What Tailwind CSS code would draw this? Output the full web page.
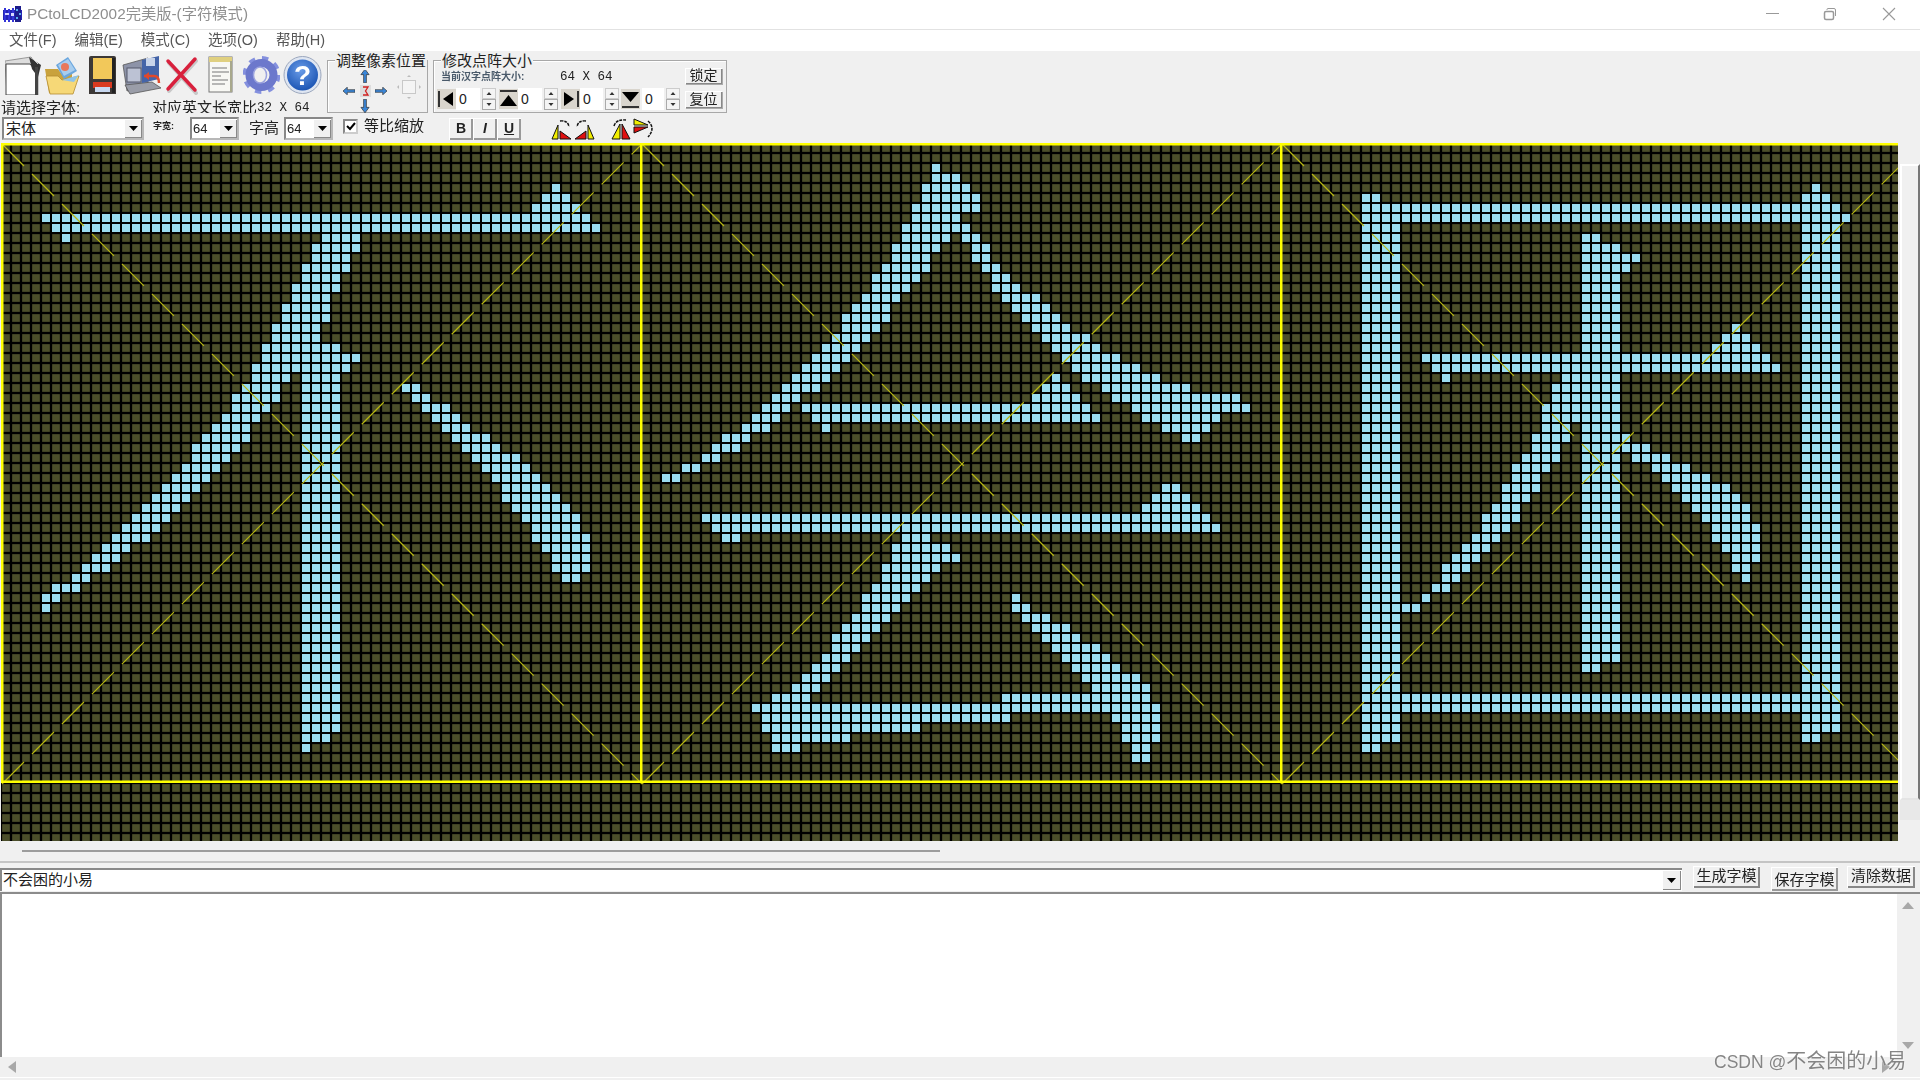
<!DOCTYPE html>
<html lang="zh-CN">
<head>
    <meta charset="UTF-8">
    <title>PCtoLCD2002完美版-(字符模式)</title>
    <script src="https://cdn.jsdelivr.net/npm/@tailwindcss/browser@4"></script>
</head>
<body class="w-[1920px] h-[1080px] overflow-hidden relative flex flex-col bg-[#f0f0f0] text-[#222] font-['Liberation_Sans','Noto_Sans_CJK_SC',sans-serif]">

    <!-- Title bar -->
    <header class="h-[29px] bg-white flex items-center shrink-0">
        <svg class="ml-[2px] w-[21px] h-[17px]" viewBox="0 0 21 17">
            <rect x="1" y="4" width="19" height="10" fill="#2424b4"/>
            <rect x="13" y="0" width="6" height="16" fill="#1c1c8c"/>
            <rect x="2" y="2" width="2" height="14" fill="#3434d8"/>
            <rect x="6" y="3" width="2" height="13" fill="#3434d8"/>
            <rect x="10" y="2" width="2" height="14" fill="#3434d8"/>
            <rect x="3" y="7" width="4" height="2" fill="#d8d8ff"/>
            <rect x="9" y="7" width="3" height="3" fill="#d8d8ff"/>
            <rect x="14" y="3" width="2" height="2" fill="#5ab0f0"/>
            <rect x="17" y="7" width="2" height="2" fill="#5ab0f0"/>
            <rect x="14" y="11" width="2" height="2" fill="#5ab0f0"/>
        </svg>
        <span class="ml-[4px] text-[15.3px] text-[#8f8f8f] whitespace-nowrap blur-[0.3px]">PCtoLCD2002完美版-(字符模式)</span>
        <div class="ml-auto flex items-center">
            <svg class="w-[58px] h-[29px]" viewBox="0 0 58 29"><rect x="8" y="13" width="13" height="1" fill="#999"/></svg>
            <svg class="w-[59px] h-[29px]" viewBox="0 0 59 29" fill="none" stroke="#999"><rect x="8.500" y="11.500" width="9" height="8" rx="1.500" stroke-width="1.500"/><path d="M11 10V9.500Q11 8.500 12 8.500H18Q19.500 8.500 19.500 10V16"/></svg>
            <svg class="w-[45px] h-[29px]" viewBox="0 0 45 29" stroke="#999" stroke-width="1.100"><path d="M8 8L20 20M20 8L8 20"/></svg>
        </div>
    </header>

    <!-- Menu -->
    <nav class="h-[22px] bg-white border-t border-[#e2e2e2] flex items-center gap-[18px] pl-[9px] text-[14.500px] text-[#555] shrink-0 blur-[0.3px]">
        <span>文件(F)</span><span>编辑(E)</span><span>模式(C)</span><span>选项(O)</span><span>帮助(H)</span>
    </nav>

    <!-- Toolbar -->
    <section class="h-[92px] shrink-0 flex flex-col blur-[0.3px]">
        <div class="h-[65px] flex">
            <div class="w-[327px] flex flex-col">
                <div class="h-[49px] pt-[4px] pl-[5px] flex">
                    <svg class="w-[37px] h-[40px]" viewBox="0 0 37 40">
                        <path d="M0 6L26 2L33 10V40H2Z" fill="#ddd" stroke="#999"/>
                        <path d="M1 9H25L31 16V40H1Z" fill="#fff" stroke="#444"/>
                        <path d="M24 2L36 10L33 22L27 14Z" fill="#333"/>
                        <path d="M27 3L33 9" stroke="#ccc"/>
                        <rect x="30" y="12" width="3" height="28" fill="#444"/>
                    </svg>
                    <svg class="ml-[2px] w-[36px] h-[40px]" viewBox="0 0 36 40">
                        <path d="M1 14H14L17 18H28V38H5Z" fill="#c9a23c"/>
                        <path d="M12 10L24 2L33 16L20 24Z" fill="#6aa6de"/>
                        <path d="M14 10L24 4L31 15L20 21Z" fill="#a8cdee"/>
                        <circle cx="21" cy="12" r="4" fill="#e8785a"/>
                        <path d="M6 39L2 21H14L18 25L35 21L29 39Z" fill="#f6d877" stroke="#b48c30" stroke-width=".8"/>
                        <path d="M18 25L35 20L30 27Z" fill="#8fc4e8"/>
                    </svg>
                    <svg class="ml-[8px] w-[29px] h-[40px]" viewBox="0 0 29 40">
                        <path d="M1 3Q1 1 3 1H26Q28 1 28 3V39H1Z" fill="#3c3836"/>
                        <rect x="5" y="3" width="19" height="21" fill="#f2c85a"/>
                        <rect x="5" y="27" width="19" height="6" fill="#d83a20"/>
                        <rect x="7" y="32" width="15" height="5" fill="#c8d8f0"/>
                        <rect x="24" y="3" width="3" height="35" fill="#222"/>
                    </svg>
                    <svg class="ml-[5px] w-[41px] h-[40px]" viewBox="0 0 41 40">
                        <path d="M1 10L26 3V30L5 36Z" fill="#8d93a8" stroke="#555" stroke-width=".8"/>
                        <rect x="5" y="13" width="14" height="14" fill="#bcc2d4" stroke="#55586a"/>
                        <path d="M3 30L30 27L39 33L8 39Z" fill="#9a9da8" stroke="#555" stroke-width=".8"/>
                        <path d="M20 5L37 1V24L20 28Z" fill="#4464a8"/>
                        <rect x="24" y="3" width="9" height="8" fill="#c8d4ea"/>
                        <path d="M22 21H32Q37 21 37 28" fill="none" stroke="#e0482a" stroke-width="2.500"/>
                        <path d="M22 21L27 17V25Z" fill="#e0482a"/>
                    </svg>
                    <svg class="ml-[2px] w-[33px] h-[40px]" viewBox="0 0 33 40" stroke-linecap="round">
                        <path d="M3 7L30 37M30 5L3 35" stroke="#c8c8c8" stroke-width="4" transform="translate(1 1)"/>
                        <path d="M3 6L30 35M30 4L3 34" stroke="#d8203c" stroke-width="3.500"/>
                    </svg>
                    <svg class="ml-[10px] w-[25px] h-[40px]" viewBox="0 0 25 40">
                        <rect x="1" y="2" width="23" height="35" fill="#f8f8f4" stroke="#777"/>
                        <rect x="1" y="2" width="23" height="5" fill="#e0d080"/>
                        <path d="M4 13H19M4 17H21M4 21H13M4 25H20M4 29H17" stroke="#777" stroke-width="1.200"/>
                        <rect x="22" y="6" width="2" height="31" fill="#a8a88c"/>
                    </svg>
                    <svg class="ml-[10px] w-[37px] h-[40px]" viewBox="0 0 37 40">
                        <circle cx="18.500" cy="20" r="16" fill="none" stroke="#8490de" stroke-width="6" stroke-dasharray="6 6.560"/>
                        <circle cx="18.500" cy="20" r="12" fill="none" stroke="#6c78cc" stroke-width="8"/>
                        <ellipse cx="17" cy="20" rx="6.500" ry="8" fill="#f0f0f0"/>
                        <ellipse cx="17" cy="20" rx="6.500" ry="8" fill="none" stroke="#9aa2de" stroke-width="1.500"/>
                    </svg>
                    <svg class="ml-[3px] w-[39px] h-[40px]" viewBox="0 0 39 40">
                        <defs><radialGradient id="helpBlue" cx=".45" cy=".35" r=".7"><stop offset="0" stop-color="#6a9ce8"/><stop offset="1" stop-color="#1650b0"/></radialGradient></defs>
                        <circle cx="19.500" cy="20" r="18.500" fill="#dfe6f2" stroke="#9aa6bc"/>
                        <circle cx="19.500" cy="20" r="15.500" fill="url(#helpBlue)"/>
                        <text x="19.500" y="30" text-anchor="middle" font-size="28" font-weight="700" fill="#fff" font-family="Liberation Sans">?</text>
                    </svg>
                </div>
                <div class="h-[16px] flex text-[15px] leading-[16px]">
                    <span class="w-[152px] pl-[1px] whitespace-nowrap">请选择字体:</span>
                    <span class="h-[13px] overflow-hidden whitespace-nowrap">对应英文长宽比<span class="relative -top-[2px] font-['Liberation_Mono',monospace] text-[12.500px]">32 X 64</span></span>
                </div>
            </div>

            <!-- 调整像素位置 -->
            <div class="relative mt-[9px] h-[53px] w-[101px] border border-[#a8a8a8] shadow-[inset_1px_1px_0_#fff] flex items-start pt-[7px] pl-[13px]">
                <span class="absolute -top-[9px] left-[7px] px-[1px] bg-[#f0f0f0] text-[15px] leading-[18px] whitespace-nowrap">调整像素位置</span>
                <div class="grid grid-cols-[16px_16px_16px] grid-rows-[15px_15px_15px] justify-items-center items-center">
                    <span></span>
                    <svg class="w-[10px] h-[14px]" viewBox="0 0 11 15"><path d="M5.500 0L10 6H7V15H4V6H1Z" fill="#3a86d8" stroke="#333" stroke-width=".8"/></svg>
                    <span></span>
                    <svg class="w-[12px] h-[8px]" viewBox="0 0 14 9"><path d="M0 4.500L5 0V3H14V6H5V9Z" fill="#3a86d8" stroke="#333" stroke-width=".8"/></svg>
                    <svg class="w-[11px] h-[12px]" viewBox="0 0 11 12"><rect width="11" height="12" fill="#ddd"/><path d="M3 2H8L5.500 6L8 10H3" fill="none" stroke="#d02020" stroke-width="1.300"/></svg>
                    <svg class="w-[12px] h-[8px]" viewBox="0 0 14 9"><path d="M14 4.500L9 0V3H0V6H9V9Z" fill="#3a86d8" stroke="#333" stroke-width=".8"/></svg>
                    <span></span>
                    <svg class="w-[10px] h-[14px]" viewBox="0 0 11 15"><path d="M5.500 15L10 9H7V0H4V9H1Z" fill="#3a86d8" stroke="#333" stroke-width=".8"/></svg>
                    <span></span>
                </div>
                <svg class="ml-[8px] mt-[7px] w-[24px] h-[24px]" viewBox="0 0 24 24" fill="#bbb">
                    <rect x="5.500" y="5.500" width="13" height="13" fill="#f4f4f4" stroke="#c8c8c8"/>
                    <path d="M12 0L14 2H10ZM12 24L10 22H14ZM0 12L2 10V14ZM24 12L22 14V10Z"/>
                </svg>
            </div>

            <!-- 修改点阵大小 -->
            <div class="relative ml-[5px] mt-[9px] h-[53px] w-[294px] border border-[#a8a8a8] shadow-[inset_1px_1px_0_#fff] flex flex-col">
                <span class="absolute -top-[9px] left-[7px] px-[1px] bg-[#f0f0f0] text-[15px] leading-[18px] whitespace-nowrap">修改点阵大小</span>
                <div class="h-[26px] flex items-center pl-[7px] pt-[3px]">
                    <span class="w-[119px] text-[10px] leading-[12px] text-[#4a5a6a] font-bold whitespace-nowrap mt-[2px]">当前汉字点阵大小:</span>
                    <span class="font-['Liberation_Mono',monospace] text-[12.500px] whitespace-pre mt-[3px]">64 X 64</span>
                    <span class="ml-auto mr-[4px] w-[37px] h-[16px] text-[14px] leading-[15px] text-center bg-[#f0f0f0] shadow-[inset_1px_1px_0_#fff,inset_-1px_-1px_0_#888,1px_1px_0_#aaa]">锁定</span>
                </div>
                <div class="flex items-center pl-[3px] pt-[1px]">
                    <div class="w-[62px] flex items-center">
                        <svg class="w-[19px] h-[20px] bg-[#d9d5cd]" viewBox="0 0 19 20"><rect x="1" y="2" width="2" height="16" fill="#333"/><path d="M6 10L16 3V17Z" fill="#000"/></svg>
                        <span class="w-[24px] h-[22px] bg-white text-[14px] leading-[22px] pl-[3px]">0</span>
                        <svg class="ml-[2px] w-[14px] h-[22px]" viewBox="0 0 14 22"><rect x=".5" y=".5" width="13" height="10" fill="#f4f4f4" stroke="#ccc"/><rect x=".5" y="11.500" width="13" height="10" fill="#f4f4f4" stroke="#aaa"/><path d="M7 4L9.500 7H4.500ZM7 18L4.500 15H9.500Z" fill="#333"/></svg>
                    </div>
                    <div class="w-[62px] flex items-center">
                        <svg class="w-[19px] h-[20px] bg-[#d9d5cd]" viewBox="0 0 19 20"><rect x="1" y="1" width="17" height="2" fill="#333"/><path d="M9.500 6L18 17H1Z" fill="#000"/></svg>
                        <span class="w-[24px] h-[22px] bg-white text-[14px] leading-[22px] pl-[3px]">0</span>
                        <svg class="ml-[2px] w-[14px] h-[22px]" viewBox="0 0 14 22"><rect x=".5" y=".5" width="13" height="10" fill="#f4f4f4" stroke="#ccc"/><rect x=".5" y="11.500" width="13" height="10" fill="#f4f4f4" stroke="#aaa"/><path d="M7 4L9.500 7H4.500ZM7 18L4.500 15H9.500Z" fill="#333"/></svg>
                    </div>
                    <div class="w-[60px] flex items-center">
                        <svg class="w-[19px] h-[20px] bg-[#d9d5cd]" viewBox="0 0 19 20"><path d="M3 3L13 10L3 17Z" fill="#000"/><rect x="16" y="2" width="2" height="16" fill="#333"/></svg>
                        <span class="w-[23px] h-[22px] bg-white text-[14px] leading-[22px] pl-[3px]">0</span>
                        <svg class="ml-[2px] w-[14px] h-[22px]" viewBox="0 0 14 22"><rect x=".5" y=".5" width="13" height="10" fill="#f4f4f4" stroke="#ccc"/><rect x=".5" y="11.500" width="13" height="10" fill="#f4f4f4" stroke="#aaa"/><path d="M7 4L9.500 7H4.500ZM7 18L4.500 15H9.500Z" fill="#333"/></svg>
                    </div>
                    <div class="flex items-center">
                        <svg class="w-[19px] h-[20px] bg-[#d9d5cd]" viewBox="0 0 19 20"><path d="M1 3H18L9.500 13Z" fill="#000"/><rect x="1" y="17" width="17" height="2" fill="#333"/></svg>
                        <span class="ml-[2px] w-[22px] h-[22px] bg-white text-[14px] leading-[22px] pl-[3px]">0</span>
                        <svg class="ml-[2px] w-[14px] h-[22px]" viewBox="0 0 14 22"><rect x=".5" y=".5" width="13" height="10" fill="#f4f4f4" stroke="#ccc"/><rect x=".5" y="11.500" width="13" height="10" fill="#f4f4f4" stroke="#aaa"/><path d="M7 4L9.500 7H4.500ZM7 18L4.500 15H9.500Z" fill="#333"/></svg>
                    </div>
                    <span class="ml-auto mr-[4px] w-[37px] h-[17px] text-[14px] leading-[16px] text-center bg-[#f0f0f0] shadow-[inset_1px_1px_0_#fff,inset_-1px_-1px_0_#888,1px_1px_0_#aaa]">复位</span>
                </div>
            </div>
        </div>

        <!-- Font combos -->
        <div class="h-[27px] flex items-start pt-[1px] text-[15px]">
            <div class="ml-[2px] w-[142px] h-[23px] flex border-2 border-t-[#888] border-l-[#888] border-r-[#b8b8b8] border-b-[#b8b8b8] bg-white">
                <span class="flex-1 pl-[2px] leading-[19px] text-[15px]">宋体</span>
                <span class="w-[18px] bg-[#f0f0f0] flex items-center justify-center shadow-[inset_1px_1px_0_#fff,inset_-1px_-1px_0_#888]"><svg class="w-[9px] h-[5px]" viewBox="0 0 9 5"><path d="M0 0H9L4.500 5Z"/></svg></span>
            </div>
            <span class="ml-[9px] w-[38px] mt-[3px] text-[9px] font-bold leading-[12px] whitespace-nowrap">字宽:</span>
            <div class="-ml-[1px] w-[49px] h-[23px] flex border-2 border-t-[#888] border-l-[#888] border-r-[#b8b8b8] border-b-[#b8b8b8] bg-white">
                <span class="flex-1 pl-[1px] leading-[19px] text-[13px]">64</span>
                <span class="w-[18px] bg-[#f0f0f0] flex items-center justify-center shadow-[inset_1px_1px_0_#fff,inset_-1px_-1px_0_#888]"><svg class="w-[9px] h-[5px]" viewBox="0 0 9 5"><path d="M0 0H9L4.500 5Z"/></svg></span>
            </div>
            <span class="ml-[10px] w-[35px] leading-[21px]">字高</span>
            <div class="w-[49px] h-[23px] flex border-2 border-t-[#888] border-l-[#888] border-r-[#b8b8b8] border-b-[#b8b8b8] bg-white">
                <span class="flex-1 pl-[1px] leading-[19px] text-[13px]">64</span>
                <span class="w-[18px] bg-[#f0f0f0] flex items-center justify-center shadow-[inset_1px_1px_0_#fff,inset_-1px_-1px_0_#888]"><svg class="w-[9px] h-[5px]" viewBox="0 0 9 5"><path d="M0 0H9L4.500 5Z"/></svg></span>
            </div>
            <span class="ml-[10px] mt-[2px] w-[15px] h-[15px] border-2 border-t-[#888] border-l-[#888] border-r-[#ccc] border-b-[#ccc] bg-white flex items-center justify-center"><svg class="w-[10px] h-[9px]" viewBox="0 0 10 9"><path d="M1 4L4 7L9 1" fill="none" stroke="#000" stroke-width="2"/></svg></span>
            <span class="ml-[6px] mt-[1px] w-[85px] leading-[16px] text-[15px] whitespace-nowrap">等比缩放</span>
            <div class="flex h-[22px] mt-[1px] font-['Liberation_Sans'] text-[14px] font-bold">
                <span class="w-[24px] text-center leading-[21px] shadow-[inset_1px_1px_0_#fff,inset_-2px_-2px_0_#999]">B</span>
                <span class="w-[24px] text-center leading-[21px] italic shadow-[inset_1px_1px_0_#fff,inset_-2px_-2px_0_#999]">I</span>
                <span class="w-[24px] text-center leading-[21px] underline shadow-[inset_1px_1px_0_#fff,inset_-2px_-2px_0_#999]">U</span>
            </div>
            <svg class="ml-[30px] mt-[1px] w-[44px] h-[22px]" viewBox="0 0 44 22">
                <path d="M1 21L7 7V21Z" fill="#f2ee00" stroke="#111" stroke-width="1"/><path d="M9 13L20 21H9Z" fill="#e01010" stroke="#111" stroke-width="1"/><path d="M9 3Q17 2 18 9" fill="none" stroke="#111" stroke-width="1.500" stroke-dasharray="3 1"/>
                <path d="M43 21L37 7V21Z" fill="#f2ee00" stroke="#111" stroke-width="1"/><path d="M35 13L24 21H35Z" fill="#e01010" stroke="#111" stroke-width="1"/><path d="M35 3Q27 2 26 9" fill="none" stroke="#111" stroke-width="1.500" stroke-dasharray="3 1"/>
            </svg>
            <svg class="ml-[15px] mt-[1px] w-[46px] h-[22px]" viewBox="0 0 46 22">
                <path d="M2 21L10 6V21Z" fill="#f2ee00" stroke="#111" stroke-width="1"/><path d="M12 6L20 21H12Z" fill="#e01010" stroke="#111" stroke-width="1"/><path d="M4 8Q6 1 16 2" fill="none" stroke="#111" stroke-width="1.500" stroke-dasharray="3 1"/>
                <path d="M24 1L38 7H24Z" fill="#f2ee00" stroke="#111" stroke-width="1"/><path d="M24 9H38L24 15Z" fill="#e01010" stroke="#111" stroke-width="1"/><path d="M38 3Q46 10 38 19" fill="none" stroke="#111" stroke-width="1.500" stroke-dasharray="3 1"/>
            </svg>
        </div>
    </section>

    <!-- Dot matrix + vertical scrollbar -->
    <section class="h-[698px] shrink-0 flex">
        <canvas id="matrix" width="1897" height="698" class="ml-[1px] w-[1897px] h-[698px] block"></canvas>
        <div class="flex-1 flex flex-col">
            <div class="h-[21px]"></div>
            <div class="h-[636px] bg-[#f0f0f0] border-2 border-t-white border-l-white border-r-[#777] border-b-[#e4e4e4] ml-[2px]"></div>
            <div class="h-[20px] bg-[#e8e8e8] ml-[2px]"></div>
        </div>
    </section>

    <!-- Horizontal scrollbar strip -->
    <section class="h-[22px] shrink-0 border-b-2 border-[#c4c4c4] pt-[9px]">
        <div class="ml-[22px] w-[918px] h-[2px] bg-[#9c9c9c]"></div>
    </section>

    <!-- Text input row -->
    <section class="h-[29px] shrink-0 flex relative blur-[0.3px]">
        <div class="mt-[5px] w-[1682px] h-[23px] border-t-2 border-l-2 border-[#888] bg-white flex">
            <span class="flex-1 text-[15px] leading-[20px] pl-[1px]">不会困的小易</span>
            <span class="w-[19px] h-[20px] mr-[1px] bg-[#f0f0f0] flex items-center justify-center shadow-[inset_1px_1px_0_#fff,inset_-1px_-1px_0_#888]"><svg class="w-[9px] h-[5px]" viewBox="0 0 9 5"><path d="M0 0H9L4.500 5Z"/></svg></span>
        </div>
        <span class="ml-[11px] mt-[3px] w-[67px] h-[22px] text-[15px] leading-[20px] text-center shadow-[inset_1px_1px_0_#fff,inset_-2px_-2px_0_#888]">生成字模</span>
        <span class="ml-[11px] mt-[4px] w-[67px] h-[24px] text-[15px] leading-[26px] text-center shadow-[inset_1px_1px_0_#fff,inset_-2px_-2px_0_#999]">保存字模</span>
        <span class="ml-[9px] mt-[3px] w-[68px] h-[22px] text-[15px] leading-[20px] text-center shadow-[inset_1px_1px_0_#fff,inset_-2px_-2px_0_#888]">清除数据</span>
    </section>

    <!-- Output box -->
    <section class="h-[165px] shrink-0 flex border-t-2 border-[#8c8c8c]">
        <div class="w-[1897px] border-l-2 border-[#8c8c8c] bg-white"></div>
        <div class="flex-1 flex flex-col justify-between items-center py-[8px] pr-[1px]">
            <svg class="w-[12px] h-[7px]" viewBox="0 0 12 7"><path d="M6 0L12 7H0Z" fill="#a8a8a8"/></svg>
            <svg class="w-[12px] h-[7px]" viewBox="0 0 12 7"><path d="M6 7L0 0H12Z" fill="#a8a8a8"/></svg>
        </div>
    </section>
    <section class="h-[21px] shrink-0 flex items-center justify-between pl-[8px] pr-[30px] border-b border-white">
        <svg class="w-[8px] h-[12px]" viewBox="0 0 8 12"><path d="M0 6L8 0V12Z" fill="#a8a8a8"/></svg>
        <svg class="w-[8px] h-[12px]" viewBox="0 0 8 12"><path d="M8 6L0 0V12Z" fill="#a8a8a8"/></svg>
    </section>

    <!-- Watermark -->
    <div class="absolute left-[1714px] top-[1048px] text-[#858585] text-[17.500px] leading-[26px] whitespace-pre [text-shadow:0_0_2px_#fff]">CSDN @<span class="text-[20px]">不会困的小易</span></div>

    <script>
        // lit pixels per character, "row:col-col,col-col"
        const glyphs = [
            "4:55 5:54-56 6:53-57 7:4-58 8:5-59 9:6,32-35 10:31-35 11:31-34 12:30-34 13:30-33 14:29-33 15:29-32 16-17:28-32 18-19:27-31 20:26-33 21:26-35 22:25-34 23:25-28,30-33 24:24-27,30-33,40-41 25:23-27,30-33,41-42 26:23-26,30-33,42-44 27:22-25,30-33,43-45 28:21-24,30-33,44-46 29:20-24,30-33,45-48 30:19-23,30-33,46-49 31:19-22,30-33,47-51 32:18-21,30-33,48-52 33:17-20,30-33,49-53 34:16-19,30-33,50-54 35:15-18,30-33,50-55 36:14-17,30-33,51-56 37:13-16,30-33,52-57 38:12-15,30-33,53-57 39:11-14,30-33,53-58 40:10-12,30-33,54-58 41:9-11,30-33,55-58 42:8-10,30-33,55-58 43:7-8,30-33,56-57 44:5-7,30-33 45:4-5,30-33 46:4,30-33 47-58:30-33 59:30-32 60:30",
            "2:29 3:29-31 4:28-32 5:28-33 6:27-33 7:27-31 8:26-32 9:26-30,32-33 10:25-29,33-34 11:25-28,33-34 12:24-28,34-35 13:23-27,35-36 14:23-26,35-37 15:22-25,36-39 16:21-24,37-40 17:20-24,38-41 18:20-23,39-42 19:19-22,40-44 20:18-21,41-45 21:17-20,42-47 22:16-19,43-49 23:15-18,41,44-51 24:14-17,40-42,46-54 25:13-15,39-43,47-59 26:12-14,16-44,49-60 27:11-13,17-45,50-57 28:10-12,18,52-56 29:8-10,54-55 30:7-9 31:6-7 32:4-5 33:2-3 34:52-53 35:51-54 36:50-55 37:6-56 38:7-57 39:8-9,26-28 40:25-30 41:25-31 42:24-29 43:24-28 44:23-27 45:22-26,37 46:22-25,37-38 47:21-24,38-40 48:20-23,39-42 49:19-22,40-43 50:19-21,41-45 51:18-20,42-46 52:17-19,43-47 53:16-18,44-49 54:15-17,45-50 55:13-16,36-50 56:11-51 57:12-36,47-51 58:12-27,48-51 59:13-20,48-51 60:13-15,49-50 61:49-50",
            "4:53 5:8-9,52-54 6:8-55 7:8-56 8:8-11,52-55 9:8-11,30-31,52-55 10:8-11,30-33,52-55 11:8-11,30-35,52-55 12:8-11,30-34,52-55 13-17:8-11,30-33,52-55 18:8-11,30-33,45,52-55 19:8-11,30-33,44-46,52-55 20:8-11,30-33,43-47,52-55 21:8-11,14-48,52-55 22:8-11,15-49,52-55 23:8-11,16,28-33,52-55 24-25:8-11,27-33,52-55 26-27:8-11,26-33,52-55 28:8-11,26-28,30-33,52-55 29:8-11,25-28,30-34,52-55 30:8-11,25-27,30-36,52-55 31:8-11,24-27,30-33,35-38,52-55 32:8-11,23-26,30-33,37-40,52-55 33:8-11,23-25,30-33,38-42,52-55 34:8-11,22-25,30-33,39-44,52-55 35:8-11,22-24,30-33,40-45,52-55 36:8-11,21-23,30-33,41-46,52-55 37:8-11,20-23,30-33,42-46,52-55 38:8-11,20-22,30-33,43-47,52-55 39:8-11,19-21,30-33,43-47,52-55 40:8-11,18-20,30-33,44-47,52-55 41:8-11,17-19,30-33,45-47,52-55 42:8-11,16-18,30-33,45-46,52-55 43:8-11,16-17,30-33,46,52-55 44:8-11,15-16,30-33,52-55 45:8-11,14,30-33,52-55 46:8-13,30-33,52-55 47-51:8-11,30-33,52-55 52:8-11,30-31,52-55 53-54:8-11,52-55 55-56:8-55 57-58:8-11,52-55 59:8-11,52-53 60:8-9"
        ];

        const PITCH = 10, CELL = 8, LEFT = 2, TOP = 144, CHAR = 640;
        const canvas = document.getElementById('matrix');
        const ctx = canvas.getContext('2d');
        const W = canvas.width, H = canvas.height;
        const ox = 1, oy = 143; // canvas origin on the page

        ctx.fillStyle = '#000';
        ctx.fillRect(0, 0, W, H);

        // background dots
        ctx.fillStyle = '#4b4e2a';
        for (let c = 0; c < 190; c++) {
            for (let r = 0; r < 70; r++) {
                ctx.fillRect(LEFT + c * PITCH - ox + 0.15, TOP + r * PITCH - oy + 0.15, CELL - 0.3, CELL - 0.3);
            }
        }

        // lit dots
        ctx.fillStyle = '#9bdcf0';
        glyphs.forEach((glyph, i) => {
            glyph.split(' ').forEach(item => {
                const [rows, runs] = item.split(':');
                const [r0, r1 = r0] = rows.split('-').map(Number);
                runs.split(',').forEach(run => {
                    const [a, b = a] = run.split('-').map(Number);
                    for (let r = r0; r <= r1; r++) {
                        for (let c = a; c <= b; c++) {
                            ctx.fillRect(LEFT + i * CHAR + c * PITCH - ox, TOP + r * PITCH - oy, CELL, CELL);
                        }
                    }
                });
            });
        });

        // dashed diagonals
        ctx.strokeStyle = '#b8b810';
        ctx.lineWidth = 1.2;
        ctx.setLineDash([31.1, 11.3]);
        for (let i = 0; i < 3; i++) {
            const x0 = LEFT + i * CHAR - ox, y0 = TOP - oy;
            ctx.beginPath();
            ctx.moveTo(x0, y0);
            ctx.lineTo(x0 + CHAR, y0 + CHAR);
            ctx.stroke();
            ctx.beginPath();
            ctx.moveTo(x0, y0 + CHAR);
            ctx.lineTo(x0 + CHAR, y0);
            ctx.stroke();
        }
        ctx.setLineDash([]);

        // character frame
        ctx.fillStyle = '#ffff00';
        ctx.fillRect(0, 0, W, 2.5);
        ctx.fillRect(0, 780.5 - oy, W, 2.5);
        [1, 640, 1280].forEach(x => ctx.fillRect(x - ox, 0, 2.5, 783 - oy));
    </script>
</body>
</html>
